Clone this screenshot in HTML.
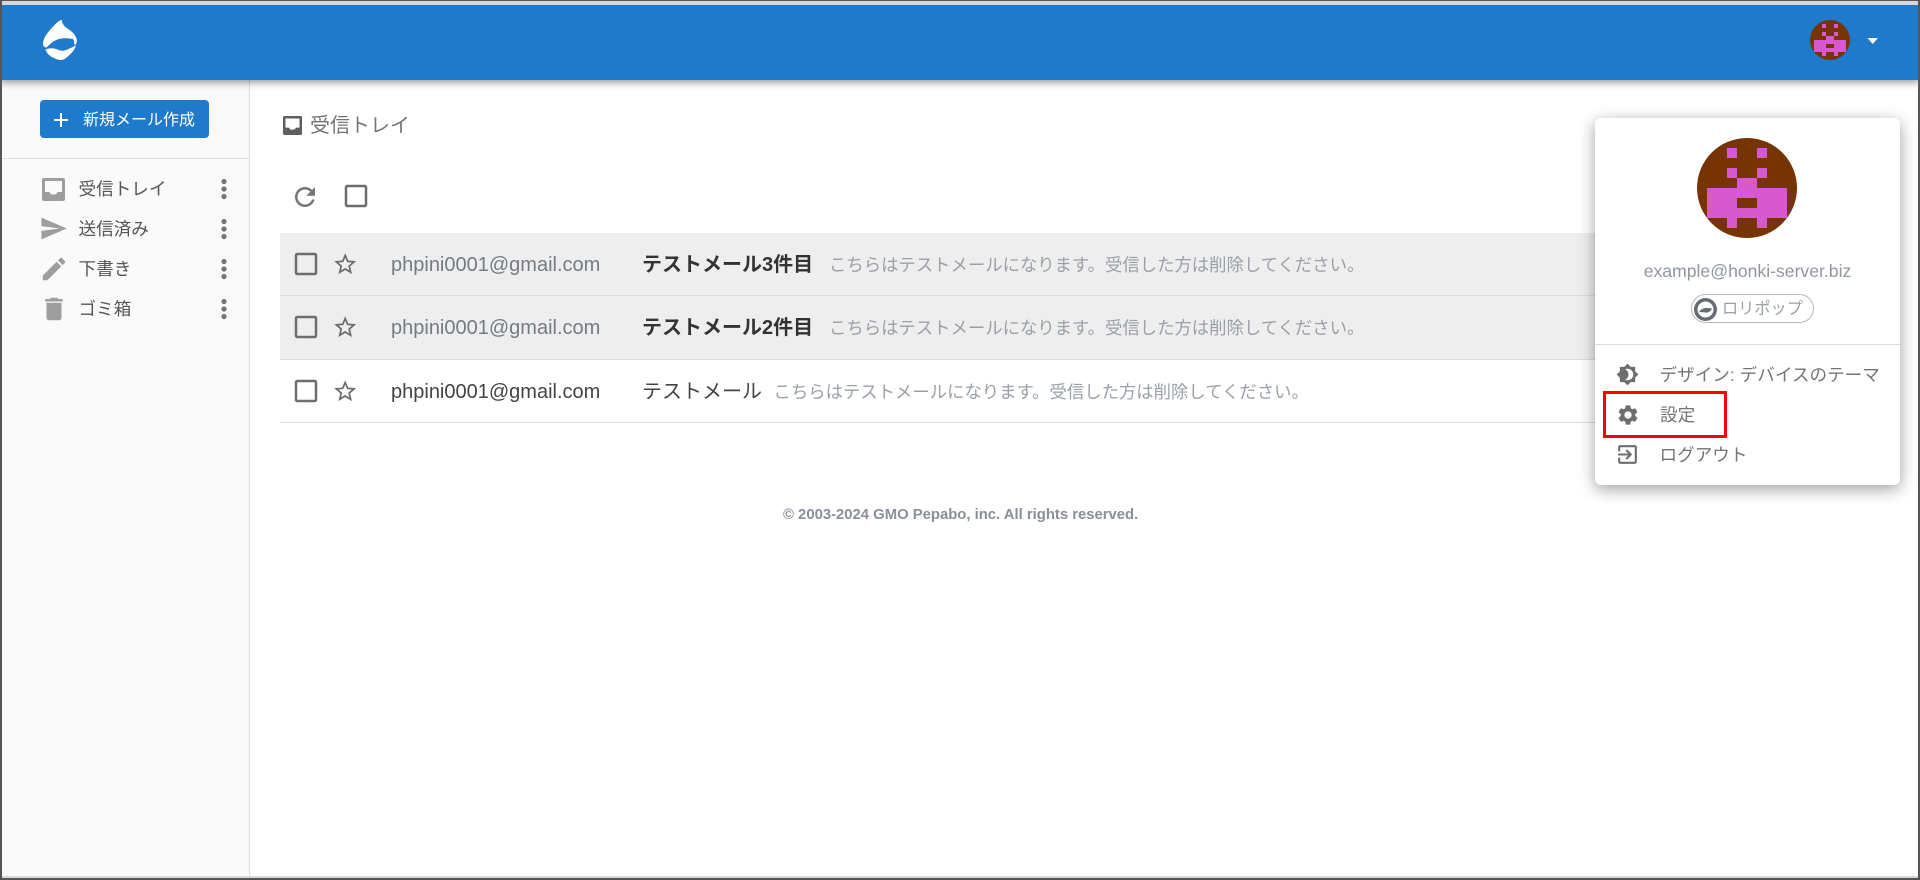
<!DOCTYPE html>
<html lang="ja">
<head>
<meta charset="utf-8">
<title>受信トレイ</title>
<style>
html,body{margin:0;padding:0;width:1920px;height:880px;overflow:hidden;background:#fff}
body{position:relative;font-family:"Liberation Sans","Noto Sans CJK JP",sans-serif;color:#555}
.a{position:absolute}
.t{position:absolute;white-space:nowrap;line-height:30px;height:30px}
svg{position:absolute;display:block}
.frame{position:absolute;left:0;top:0;width:1920px;height:880px;box-sizing:border-box;border:2px solid #555;border-top-width:1px;pointer-events:none;z-index:50}
.topgap{position:absolute;left:0;top:0;width:1920px;height:5px;background:#d8d8d8;z-index:30}
.bottomgap{position:absolute;left:0;top:876px;width:1920px;height:2px;background:#d8d8d8;z-index:30}
.hdr{position:absolute;left:0;top:5px;width:1920px;height:75px;background:#1f7acc;box-shadow:0 2px 8px rgba(0,0,0,.45);z-index:10}
.side{position:absolute;left:0;top:80px;width:249px;height:800px;background:#fafafa;border-right:1px solid #ddd}
.btn{position:absolute;left:40px;top:100px;width:169px;height:38px;background:#1f7acc;border-radius:4px}
.nav{font-size:17.6px;left:78.5px;color:#555}
.row{position:absolute;left:280px;width:1420px;box-sizing:border-box}
.sender{left:391px;font-size:20px;color:#757b84}
.sub{left:642px;font-size:20px;color:#333;font-weight:700}
.snip{font-size:17.37px;color:#9a9fa8}
.menu{position:absolute;left:1595px;top:118px;width:305px;height:367px;background:#fff;border-radius:6px;box-shadow:0 4px 16px rgba(0,0,0,.38);z-index:20}
.mi{left:1659.5px;font-size:17.6px;color:#757575;z-index:21}
.ic{z-index:21}
</style>
</head>
<body>
<div class="side"></div>
<div class="hdr"></div>
<div class="topgap"></div>
<div class="bottomgap"></div>

<svg style="left:0;top:0;z-index:11" width="100" height="80" viewBox="0 0 100 80">
<path fill="#fff" d="M62 20C60 20 57.5 22 55 24.5C52 27.5 48 32 45.5 36C43.5 39.5 43 42 43 44C43 46 44.5 47.5 46.5 47.5C48 46 49.5 44.5 51.7 42.7C54 41 56 40 58.3 39.3C61 38.4 64 38.2 66.7 38.3C69 38.4 71.5 38.7 73.3 39.3C74 41 74.4 43 74.3 45C75.5 44.5 76 44 76.5 43C77.3 40 76.5 37.5 75 35.5C73 32 69 29.5 66 27.5C63.5 25.5 61.8 23 62 20Z"/>
<path fill="#fff" d="M45.5 49.3C47 49 49.5 48.3 51.7 48.3C53.5 48.3 55 48.7 56.7 49.3C59 50.3 61 50.9 63.3 50.7C65.5 50.6 68 49.3 70 48.3C72 47.5 74.5 46.5 76 45C75.5 47.5 74 50.5 71.7 52.7C69.5 55 67 57.3 65 58.7C63.5 59.7 62 60 60 60C57.5 60 54 58 51 56.5C48.5 55 46.5 52.5 45.5 49.3Z"/>
</svg>

<svg style="left:1810px;top:20px;z-index:11" width="40" height="40" viewBox="0 0 100 100">
<circle cx="50" cy="50" r="50" fill="#763304"/>
<path shape-rendering="crispEdges" fill="#d858d0" d="M30 10h10v10H30zM60 10h10v10H60zM30 30h10v10H30zM60 30h10v10H60zM40 40h20v10H40zM10 50h80v30H10zM30 80h10v10H30zM60 80h10v10H60z"/>
<path shape-rendering="crispEdges" fill="#763304" d="M40 60h20v10H40z"/>
</svg>
<svg style="left:1866px;top:36px;z-index:11" width="14" height="10" viewBox="0 0 14 10"><path fill="#fff" d="M1.5 2h10.5l-5.25 6z"/></svg>

<!-- sidebar -->
<div class="btn"></div>
<svg style="left:54px;top:112.5px" width="14" height="14" viewBox="0 0 14 14"><path fill="#fff" d="M6 0h2v6h6v2H8v6H6V8H0V6h6z"/></svg>
<div class="t" style="left:83px;top:106px;font-size:16px;color:#fff">新規メール作成</div>
<div class="a" style="left:2px;top:158px;width:247px;height:1px;background:#ddd"></div>

<svg style="left:42px;top:178px" width="23" height="23" viewBox="0 0 23 23"><path fill="#9e9e9e" fill-rule="evenodd" d="M2 0h19a2 2 0 0 1 2 2v19a2 2 0 0 1-2 2H2a2 2 0 0 1-2-2V2a2 2 0 0 1 2-2zM3 3v11h4.5c.5 2 2 2.5 4 2.5s3.5-.5 4-2.5H20V3z"/></svg>
<svg style="left:38.6px;top:214px" width="29" height="29" viewBox="0 0 24 24"><path fill="#9e9e9e" d="M2.01 21L23 12 2.01 3 2 10l15 2-15 2z"/></svg>
<svg style="left:39px;top:254px" width="30" height="30" viewBox="0 0 24 24"><path fill="#9e9e9e" d="M3 17.25V21h3.75L17.81 9.94l-3.75-3.75L3 17.25zM20.71 7.04c.39-.39.39-1.02 0-1.41l-2.34-2.34c-.39-.39-1.02-.39-1.41 0l-1.83 1.83 3.75 3.75 1.83-1.83z"/></svg>
<svg style="left:39px;top:294px" width="30" height="30" viewBox="0 0 24 24"><path fill="#9e9e9e" d="M6 19c0 1.1.9 2 2 2h8c1.1 0 2-.9 2-2V7H6v12zM19 4h-3.5l-1-1h-5l-1 1H5v2h14V4z"/></svg>

<div class="t nav" style="top:174px">受信トレイ</div>
<div class="t nav" style="top:214px">送信済み</div>
<div class="t nav" style="top:254px">下書き</div>
<div class="t nav" style="top:294px">ゴミ箱</div>

<svg style="left:214px;top:174px" width="20" height="150" viewBox="0 0 20 150">
<g fill="#757575">
<circle cx="10" cy="7.5" r="2.6"/><circle cx="10" cy="15" r="2.6"/><circle cx="10" cy="22.5" r="2.6"/>
<circle cx="10" cy="47.5" r="2.6"/><circle cx="10" cy="55" r="2.6"/><circle cx="10" cy="62.5" r="2.6"/>
<circle cx="10" cy="87.5" r="2.6"/><circle cx="10" cy="95" r="2.6"/><circle cx="10" cy="102.5" r="2.6"/>
<circle cx="10" cy="127.5" r="2.6"/><circle cx="10" cy="135" r="2.6"/><circle cx="10" cy="142.5" r="2.6"/>
</g></svg>

<!-- main title -->
<svg style="left:283px;top:116px" width="19" height="19" viewBox="0 0 23 23"><path fill="#5f5f5f" fill-rule="evenodd" d="M2 0h19a2 2 0 0 1 2 2v19a2 2 0 0 1-2 2H2a2 2 0 0 1-2-2V2a2 2 0 0 1 2-2zM3 3v11h4.5c.5 2 2 2.5 4 2.5s3.5-.5 4-2.5H20V3z"/></svg>
<div class="t" style="left:310px;top:110.5px;font-size:20px;color:#757575">受信トレイ</div>

<!-- toolbar -->
<svg style="left:290px;top:181.5px" width="30" height="30" viewBox="0 0 24 24"><path fill="#757575" d="M17.65 6.35C16.2 4.9 14.21 4 12 4c-4.42 0-7.99 3.58-7.99 8s3.57 8 7.99 8c3.73 0 6.84-2.55 7.73-6h-2.08c-.82 2.33-3.04 4-5.65 4-3.31 0-6-2.69-6-6s2.69-6 6-6c1.66 0 3.14.69 4.22 1.78L13 11h7V4l-2.35 2.35z"/></svg>
<svg style="left:341px;top:181px" width="30" height="30" viewBox="0 0 24 24"><path fill="#6e6e6e" d="M19 5v14H5V5h14m0-2H5c-1.1 0-2 .9-2 2v14c0 1.1.9 2 2 2h14c1.1 0 2-.9 2-2V5c0-1.11-.9-2-2-2z"/></svg>

<!-- rows -->
<div class="row" style="top:233px;height:63px;background:#eee;border-bottom:1px solid #ddd"></div>
<div class="row" style="top:296px;height:64px;background:#eee;border-bottom:1px solid #ddd"></div>
<div class="row" style="top:360px;height:63px;background:#fff;border-bottom:1px solid #ddd"></div>

<svg style="left:291px;top:249px" width="30" height="30" viewBox="0 0 24 24"><path fill="#6e6e6e" d="M19 5v14H5V5h14m0-2H5c-1.1 0-2 .9-2 2v14c0 1.1.9 2 2 2h14c1.1 0 2-.9 2-2V5c0-1.11-.9-2-2-2z"/></svg>
<svg style="left:291px;top:312px" width="30" height="30" viewBox="0 0 24 24"><path fill="#6e6e6e" d="M19 5v14H5V5h14m0-2H5c-1.1 0-2 .9-2 2v14c0 1.1.9 2 2 2h14c1.1 0 2-.9 2-2V5c0-1.11-.9-2-2-2z"/></svg>
<svg style="left:291px;top:375.7px" width="30" height="30" viewBox="0 0 24 24"><path fill="#6e6e6e" d="M19 5v14H5V5h14m0-2H5c-1.1 0-2 .9-2 2v14c0 1.1.9 2 2 2h14c1.1 0 2-.9 2-2V5c0-1.11-.9-2-2-2z"/></svg>

<svg style="left:331.8px;top:250.8px" width="26.4" height="26.4" viewBox="0 0 24 24"><path fill="#6e6e6e" d="M22 9.24l-7.19-.62L12 2 9.19 8.63 2 9.24l5.46 4.73L5.82 21 12 17.27 18.18 21l-1.63-7.03L22 9.24zM12 15.4l-3.76 2.27 1-4.28-3.32-2.88 4.38-.38L12 6.1l1.71 4.04 4.38.38-3.32 2.88 1 4.28L12 15.4z"/></svg>
<svg style="left:331.8px;top:313.6px" width="26.4" height="26.4" viewBox="0 0 24 24"><path fill="#6e6e6e" d="M22 9.24l-7.19-.62L12 2 9.19 8.63 2 9.24l5.46 4.73L5.82 21 12 17.27 18.18 21l-1.63-7.03L22 9.24zM12 15.4l-3.76 2.27 1-4.28-3.32-2.88 4.38-.38L12 6.1l1.71 4.04 4.38.38-3.32 2.88 1 4.28L12 15.4z"/></svg>
<svg style="left:331.8px;top:377.6px" width="26.4" height="26.4" viewBox="0 0 24 24"><path fill="#6e6e6e" d="M22 9.24l-7.19-.62L12 2 9.19 8.63 2 9.24l5.46 4.73L5.82 21 12 17.27 18.18 21l-1.63-7.03L22 9.24zM12 15.4l-3.76 2.27 1-4.28-3.32-2.88 4.38-.38L12 6.1l1.71 4.04 4.38.38-3.32 2.88 1 4.28L12 15.4z"/></svg>

<div class="t sender" style="top:250px">phpini0001@gmail.com</div>
<div class="t sender" style="top:313px">phpini0001@gmail.com</div>
<div class="t sender" style="top:376.5px;color:#444">phpini0001@gmail.com</div>

<div class="t sub" style="top:250px">テストメール3件目</div>
<div class="t sub" style="top:313px">テストメール2件目</div>
<div class="t sub" style="top:376.5px;font-weight:400;color:#444">テストメール</div>

<div class="t snip" style="left:829px;top:250px">こちらはテストメールになります。受信した方は削除してください。</div>
<div class="t snip" style="left:829px;top:313px">こちらはテストメールになります。受信した方は削除してください。</div>
<div class="t snip" style="left:773.5px;top:376.5px">こちらはテストメールになります。受信した方は削除してください。</div>

<div class="t" style="left:783px;top:500px;font-size:14.85px;font-weight:700;color:#8a8f98">© 2003-2024 GMO Pepabo, inc. All rights reserved.</div>

<!-- dropdown menu -->
<div class="menu"></div>
<svg class="ic" style="left:1697px;top:138px" width="100" height="100" viewBox="0 0 100 100">
<circle cx="50" cy="50" r="50" fill="#763304"/>
<path shape-rendering="crispEdges" fill="#d858d0" d="M30 10h10v10H30zM60 10h10v10H60zM30 30h10v10H30zM60 30h10v10H60zM40 40h20v10H40zM10 50h80v30H10zM30 80h10v10H30zM60 80h10v10H60z"/>
<path shape-rendering="crispEdges" fill="#763304" d="M40 60h20v10H40z"/>
</svg>
<div class="t" style="left:1595px;width:305px;text-align:center;top:256px;font-size:17.6px;color:#9096a0;z-index:21">example@honki-server.biz</div>

<div class="a" style="left:1691px;top:294px;width:123px;height:29px;box-sizing:border-box;border:1px solid #b5b8be;border-radius:15px;z-index:21"></div>
<svg class="ic" style="left:1694px;top:297.5px" width="23" height="23" viewBox="0 0 23 23">
<circle cx="11.5" cy="11.5" r="11.5" fill="#666b72"/>
<circle cx="11.5" cy="11.5" r="8" fill="#fff"/>
<path fill="#666b72" d="M5 14C8 9.5 12 9.5 18 10.5C17 13.5 14 15 11 14.5C9 14.2 7 14 5 14Z"/>
</svg>
<div class="t" style="left:1722px;top:294px;font-size:16.2px;color:#9a9fa8;z-index:21">ロリポップ</div>

<div class="a" style="left:1595px;top:344px;width:305px;height:1px;background:#ddd;z-index:21"></div>

<svg class="ic" style="left:1616px;top:363px" width="23" height="23" viewBox="0 0 24 24"><path fill="#6d6d6d" d="M20 8.69V4h-4.69L12 .69 8.69 4H4v4.69L.69 12 4 15.31V20h4.69L12 23.31 15.31 20H20v-4.69L23.31 12 20 8.69zM12 18c-.89 0-1.74-.2-2.5-.55C11.56 16.5 13 14.42 13 12s-1.44-4.5-3.5-5.45C10.26 6.2 11.11 6 12 6c3.31 0 6 2.69 6 6s-2.69 6-6 6z"/></svg>
<svg class="ic" style="left:1615.5px;top:402.5px" width="24" height="24" viewBox="0 0 24 24"><path fill="#6d6d6d" d="M19.14 12.94c.04-.3.06-.61.06-.94 0-.32-.02-.64-.07-.94l2.03-1.58c.18-.14.23-.41.12-.61l-1.92-3.32c-.12-.22-.37-.29-.59-.22l-2.39.96c-.5-.38-1.03-.7-1.62-.94l-.36-2.54c-.04-.24-.24-.41-.48-.41h-3.84c-.24 0-.43.17-.47.41l-.36 2.54c-.59.24-1.13.57-1.62.94l-2.39-.96c-.22-.08-.47 0-.59.22L2.74 8.87c-.12.21-.08.47.12.61l2.03 1.58c-.05.3-.09.63-.09.94s.02.64.07.94l-2.03 1.58c-.18.14-.23.41-.12.61l1.92 3.32c.12.22.37.29.59.22l2.39-.96c.5.38 1.03.7 1.62.94l.36 2.54c.05.24.24.41.48.41h3.84c.24 0 .44-.17.47-.41l.36-2.54c.59-.24 1.13-.56 1.62-.94l2.39.96c.22.08.47 0 .59-.22l1.92-3.32c.12-.22.07-.47-.12-.61l-2.01-1.58zM12 15.6c-1.98 0-3.6-1.62-3.6-3.6s1.62-3.6 3.6-3.6 3.6 1.62 3.6 3.6-1.62 3.6-3.6 3.6z"/></svg>
<svg class="ic" style="left:1614.5px;top:442px" width="25" height="25" viewBox="0 0 24 24"><path fill="#6d6d6d" d="M10.09 15.59L11.5 17l5-5-5-5-1.41 1.41L12.67 11H3v2h9.67l-2.58 2.59zM19 3H5c-1.11 0-2 .9-2 2v4h2V5h14v14H5v-4H3v4c0 1.1.89 2 2 2h14c1.1 0 2-.9 2-2V5c0-1.1-.9-2-2-2z"/></svg>

<div class="t mi" style="top:360px">デザイン: デバイスのテーマ</div>
<div class="t mi" style="top:400px;left:1660px">設定</div>
<div class="t mi" style="top:439.5px">ログアウト</div>

<div class="a" style="left:1603px;top:391px;width:124px;height:47px;box-sizing:border-box;border:3px solid #f00;z-index:22"></div>

<div class="frame"></div>
</body>
</html>
